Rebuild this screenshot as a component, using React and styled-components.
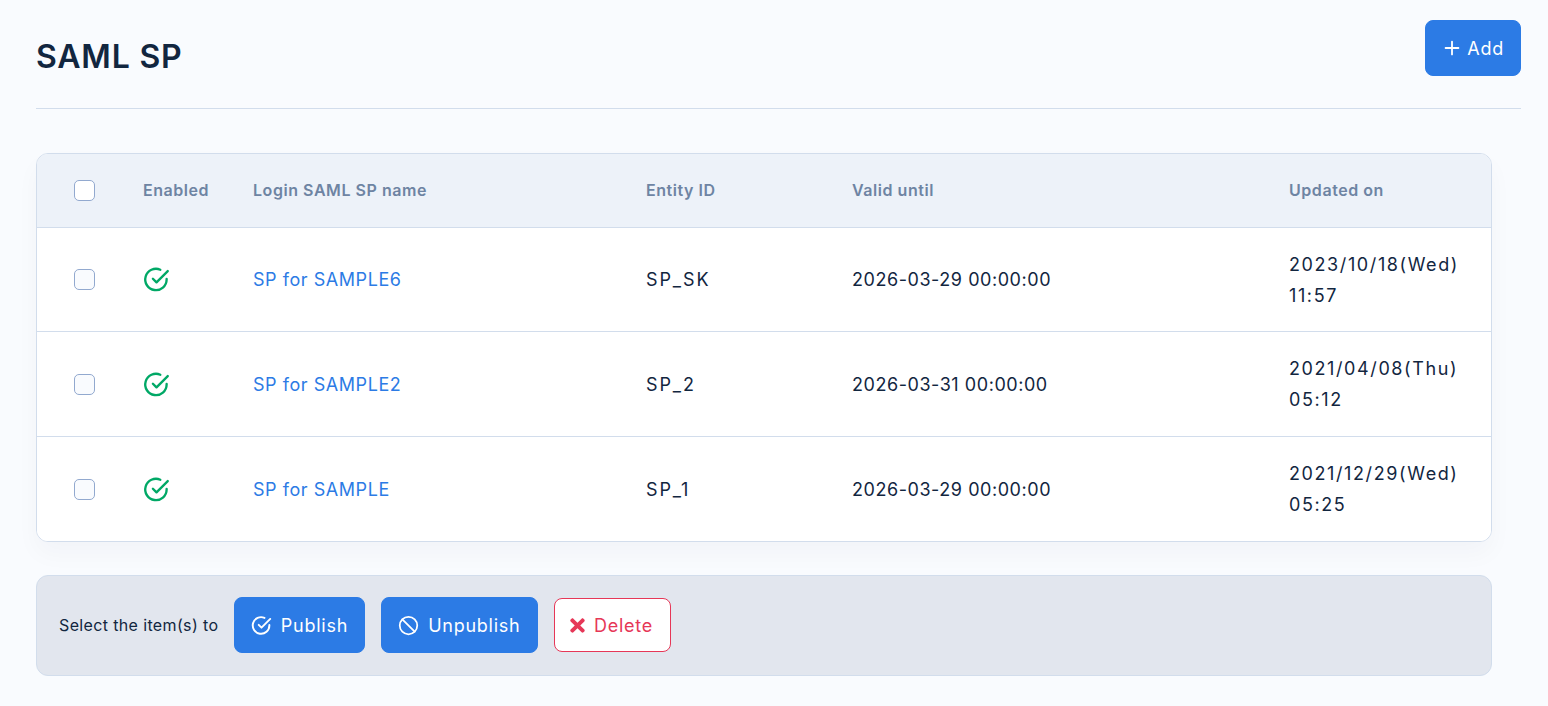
import React from 'react';
import styled, { createGlobalStyle } from 'styled-components';
import { FiPlus, FiSlash } from 'react-icons/fi';
import { FaTimes } from 'react-icons/fa';

const GlobalStyle = createGlobalStyle`
    html, body {
        margin: 0;
        background: #f9fbfe;
        color: #12263f;
        font-family: "Inter", "Noto Sans", sans-serif;
    }
`
const Page = styled.div`
    padding: 20px 27px 30px 36px;
`
const Header = styled.header`
    display: flex;
    justify-content: space-between;
    align-items: flex-start;
    height: 88px;
    border-bottom: 1px solid #d2ddec;
`
const Title = styled.h1`
    margin: 16px 0 0;
    font-size: 32px;
    line-height: 42px;
    font-weight: 600;
    letter-spacing: 0.8px;
    color: #12263f;
`
const Button = styled.button`
    display: inline-flex;
    align-items: center;
    gap: 9px;
    height: 56px;
    padding: 0 ${props => props.$pad || 15.5}px;
    border: 1px solid #2c7be5;
    border-radius: 8px;
    background: #2c7be5;
    color: #fff;
    font-family: inherit;
    font-size: 18px;
    letter-spacing: 0.75px;
`
const AddButton = styled(Button)`
    gap: 4px;
    padding: 0 16px 0 15px;
`
const DeleteButton = styled(Button)`
    height: 54px;
    gap: 6px;
    padding: 0 17px 0 12px;
    background: #fff;
    border-color: #e63757;
    color: #e63757;
`
const Card = styled.section`
    width: 1456px;
    box-sizing: border-box;
    margin-top: 44px;
    border: 1px solid #d2ddec;
    border-radius: 12px;
    background: #fff;
    overflow: hidden;
    box-shadow: 0 12px 24px rgba(18, 38, 63, 0.03);
`
const Row = styled.div`
    display: grid;
    grid-template-columns: 69px 110px 393px 206px 437px 1fr;
    align-items: center;
    box-sizing: border-box;
    height: ${props => props.$height}px;
    padding-left: 37px;
    border-top: ${props => (props.$first ? 'none' : '1px solid #d2ddec')};
    background: ${props => (props.$head ? '#edf2f9' : '#fff')};
`
const HeadCell = styled.div`
    font-size: 16px;
    font-weight: 600;
    letter-spacing: 0.55px;
    color: #6e84a3;
    position: relative;
    top: -1px;
`
const Cell = styled.div`
    font-size: 18px;
    line-height: 31px;
    letter-spacing: ${props => props.$spacing || 0}px;
    color: #12263f;
`
const IconCell = styled.div`
    display: flex;
    align-items: center;
`
const NameLink = styled.a`
    font-size: 18px;
    letter-spacing: 0.55px;
    color: #2c7be5;
    text-decoration: none;
`
const Checkbox = styled.span`
    display: block;
    width: 21px;
    height: 21px;
    box-sizing: border-box;
    border: 1px solid #92a9cf;
    border-radius: 5px;
    background: ${props => (props.$head ? '#fff' : '#f9fbfe')};
`
const ActionBar = styled.div`
    display: flex;
    align-items: center;
    gap: 16px;
    width: 1456px;
    height: 101px;
    box-sizing: border-box;
    margin-top: 33px;
    padding: 0 0 1px 22px;
    border: 1px solid #d2ddec;
    border-radius: 12px;
    background: #e2e6ee;
`
const ActionLabel = styled.span`
    font-size: 16px;
    letter-spacing: 0.36px;
    color: #12263f;
`

const CheckCircle = ({ size, color, width }) => (
    <svg width={size} height={size} viewBox="0 0 24 24" fill="none" stroke={color} strokeWidth={width} strokeLinecap="round" strokeLinejoin="round">
        <path d="M21 11.5V12a9.5 9.5 0 1 1-5.6-8.7" />
        <path d="M22 4.5 12 14.5l-3.2-3.2" />
    </svg>
)

const rows = [
    { name: 'SP for SAMPLE6', entity: 'SP_SK', valid: '2026-03-29 00:00:00', date: '2023/10/18(Wed)', time: '11:57', height: 104 },
    { name: 'SP for SAMPLE2', entity: 'SP_2', valid: '2026-03-31 00:00:00', date: '2021/04/08(Thu)', time: '05:12', height: 105 },
    { name: 'SP for SAMPLE', entity: 'SP_1', valid: '2026-03-29 00:00:00', date: '2021/12/29(Wed)', time: '05:25', height: 105 },
];

const App = () => {
    return (
        <Page>
            <GlobalStyle />
            <Header>
                <Title>SAML SP</Title>
                <AddButton><FiPlus size={22} /> Add</AddButton>
            </Header>
            <Card>
                <Row $head $first $height={73}>
                    <Checkbox $head />
                    <HeadCell>Enabled</HeadCell>
                    <HeadCell>Login SAML SP name</HeadCell>
                    <HeadCell>Entity ID</HeadCell>
                    <HeadCell>Valid until</HeadCell>
                    <HeadCell>Updated on</HeadCell>
                </Row>
                {rows.map(row => (
                    <Row key={row.name} $height={row.height}>
                        <Checkbox />
                        <IconCell><CheckCircle size={27} color="#00a866" width={2.1} /></IconCell>
                        <Cell><NameLink href="#">{row.name}</NameLink></Cell>
                        <Cell $spacing={1.9}>{row.entity}</Cell>
                        <Cell $spacing={0.55}>{row.valid}</Cell>
                        <Cell $spacing={1.6}>{row.date}<br />{row.time}</Cell>
                    </Row>
                ))}
            </Card>
            <ActionBar>
                <ActionLabel>Select the item(s) to</ActionLabel>
                <Button><CheckCircle size={21} color="#fff" width={2.2} /> Publish</Button>
                <Button $pad={16.5}><FiSlash size={21} /> Unpublish</Button>
                <DeleteButton><FaTimes size={21} /> Delete</DeleteButton>
            </ActionBar>
        </Page>
    )
}
export default App;
